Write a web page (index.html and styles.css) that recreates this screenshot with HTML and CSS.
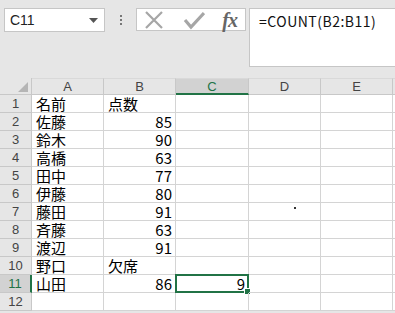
FILE: index.html
```html
<!DOCTYPE html>
<html lang="ja">
<head>
  <meta charset="UTF-8">
  <title>Excel</title>
  <link rel="stylesheet" href="styles.css">
</head>
<body>
  <div class="toolbar">
    <div class="namebox">
      <span>C11</span>
      <svg class="drop" width="9" height="5" viewBox="0 0 9 5"><path d="M0 0h9L4.5 5z" fill="#555"/></svg>
    </div>
    <div class="dots"><i></i><i></i><i></i></div>
    <div class="buttons">
      <svg width="22" height="22" viewBox="0 0 22 22"><path d="M3 3L19 19M19 3L3 19" stroke="#a6a6a6" stroke-width="2.2" fill="none"/></svg>
      <svg width="22" height="22" viewBox="0 0 22 22"><path d="M2 11l6 7L21 4" stroke="#a6a6a6" stroke-width="3.2" fill="none"/></svg>
      <span class="fx">fx</span>
    </div>
    <div class="formula">=COUNT(B2:B11)</div>
  </div>

  <div class="sheet">
    <div class="corner"><svg width="10" height="10" viewBox="0 0 10 10"><path d="M10 0V10H0z" fill="#b5b5b5"/></svg></div>
    <div class="colhead">A</div>
    <div class="colhead">B</div>
    <div class="colhead sel">C</div>
    <div class="colhead">D</div>
    <div class="colhead">E</div>
    <div class="colhead"></div>

    <div class="rowhead">1</div><div class="cell">名前</div><div class="cell">点数</div><div class="cell"></div><div class="cell"></div><div class="cell"></div><div class="cell"></div>
    <div class="rowhead">2</div><div class="cell">佐藤</div><div class="cell num">85</div><div class="cell"></div><div class="cell"></div><div class="cell"></div><div class="cell"></div>
    <div class="rowhead">3</div><div class="cell">鈴木</div><div class="cell num">90</div><div class="cell"></div><div class="cell"></div><div class="cell"></div><div class="cell"></div>
    <div class="rowhead">4</div><div class="cell">高橋</div><div class="cell num">63</div><div class="cell"></div><div class="cell"></div><div class="cell"></div><div class="cell"></div>
    <div class="rowhead">5</div><div class="cell">田中</div><div class="cell num">77</div><div class="cell"></div><div class="cell"></div><div class="cell"></div><div class="cell"></div>
    <div class="rowhead">6</div><div class="cell">伊藤</div><div class="cell num">80</div><div class="cell"></div><div class="cell"></div><div class="cell"></div><div class="cell"></div>
    <div class="rowhead">7</div><div class="cell">藤田</div><div class="cell num">91</div><div class="cell"></div><div class="cell"><b class="speck"></b></div><div class="cell"></div><div class="cell"></div>
    <div class="rowhead">8</div><div class="cell">斉藤</div><div class="cell num">63</div><div class="cell"></div><div class="cell"></div><div class="cell"></div><div class="cell"></div>
    <div class="rowhead">9</div><div class="cell">渡辺</div><div class="cell num">91</div><div class="cell"></div><div class="cell"></div><div class="cell"></div><div class="cell"></div>
    <div class="rowhead">10</div><div class="cell">野口</div><div class="cell">欠席</div><div class="cell"></div><div class="cell"></div><div class="cell"></div><div class="cell"></div>
    <div class="rowhead sel">11</div><div class="cell">山田</div><div class="cell num">86</div><div class="cell num active">9<b class="handle"></b></div><div class="cell"></div><div class="cell"></div><div class="cell"></div>
    <div class="rowhead">12</div><div class="cell"></div><div class="cell"></div><div class="cell"></div><div class="cell"></div><div class="cell"></div><div class="cell"></div>
  </div>
</body>
</html>
```

FILE: styles.css
```css
/* Generale */
body {
  margin: 0;
  width: 395px;
  height: 313px;
  overflow: hidden;
  background: #e6e6e6;
  font-family: "Noto Sans CJK JP", "Liberation Sans", sans-serif;
}

/* Barra della formula */
.toolbar {
  display: flex;
  align-items: flex-start;
  height: 78px;
  padding: 8px 0 0 4px;
  box-sizing: border-box;
}

.namebox {
  width: 101px;
  height: 24px;
  box-sizing: border-box;
  background: #fff;
  border: 1px solid #c6c6c6;
  display: flex;
  align-items: center;
  justify-content: space-between;
  padding: 0 6px 0 5px;
  font-family: "Liberation Sans", sans-serif;
  font-size: 14px;
  color: #222;
}

.dots {
  width: 31px;
  height: 24px;
  display: flex;
  flex-direction: column;
  align-items: center;
  justify-content: center;
  gap: 2px;
}

.dots i {
  width: 2px;
  height: 2px;
  background: #777;
}

.buttons {
  width: 110px;
  height: 23px;
  box-sizing: border-box;
  background: #fff;
  border: 1px solid #c6c6c6;
  display: flex;
  align-items: center;
  justify-content: space-between;
  padding: 0 8px 0 6px;
}

.fx {
  font-family: "Liberation Serif", serif;
  font-style: italic;
  font-weight: bold;
  font-size: 20px;
  color: #666;
  line-height: 1;
  letter-spacing: -1px;
}

.formula {
  flex: 1;
  margin-left: 3px;
  height: 59px;
  box-sizing: border-box;
  background: #fff;
  border: 1px solid #c6c6c6;
  border-right: none;
  padding: 2px 0 0 9px;
  font-size: 14px;
  line-height: 20px;
  letter-spacing: 0.5px;
  color: #111;
}

/* Foglio */
.sheet {
  display: grid;
  grid-template-columns: 32px 72px 72px 73px 72px 72px 1fr;
  grid-template-rows: 17px;
  grid-auto-rows: 18px;
  background: #fff;
  position: relative;
}

.corner,
.colhead,
.rowhead {
  background: #e6e6e6;
  color: #444;
  box-sizing: border-box;
  border-right: 1px solid #c8c8c8;
  border-bottom: 1px solid #c8c8c8;
  display: flex;
  align-items: center;
  justify-content: center;
  font-family: "Liberation Sans", sans-serif;
  font-size: 13px;
  overflow: hidden;
}

.corner {
  justify-content: flex-end;
  align-items: flex-end;
  padding: 0 3px 2px 0;
}

.colhead {
  border-top: 1px solid #d9d9d9;
}

.colhead.sel {
  background: #d2d2d2;
  color: #217346;
  border-bottom: 2px solid #217346;
}

.rowhead.sel {
  background: #d2d2d2;
  color: #217346;
  border-right: 2px solid #217346;
}

.cell {
  box-sizing: border-box;
  border-right: 1px solid #d4d4d4;
  border-bottom: 1px solid #d4d4d4;
  font-size: 15px;
  line-height: 17px;
  padding: 0 3px 0 4px;
  color: #000;
  white-space: nowrap;
  position: relative;
}

.num {
  text-align: right;
}

.active {
  border: 2px solid #217346;
  margin: -1px 0 0 -1px;
  line-height: 15px;
  padding-right: 2px;
}

.handle {
  position: absolute;
  right: -4px;
  bottom: -4px;
  width: 5px;
  height: 5px;
  background: #217346;
  border: 1px solid #fff;
}

.speck {
  position: absolute;
  left: 45px;
  top: 4px;
  width: 2px;
  height: 2px;
  background: #333;
}
```
